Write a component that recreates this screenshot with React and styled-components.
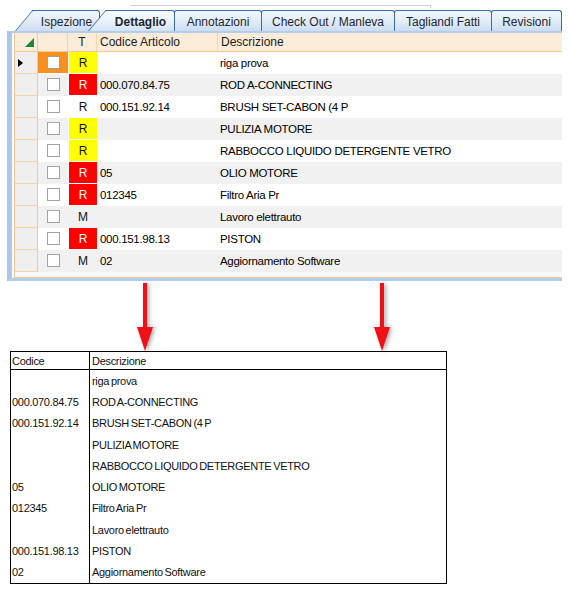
import styled, { createGlobalStyle } from 'styled-components';

const GlobalStyle = createGlobalStyle`
  html, body { margin: 0; padding: 0; background: #fff; }
  body { font-family: "Liberation Sans", Arial, sans-serif; color: #000; }
`;

const rows = [
  { t: 'R', tone: 'yellow', code: '', desc: 'riga prova', current: true },
  { t: 'R', tone: 'red', code: '000.070.84.75', desc: 'ROD A-CONNECTING' },
  { t: 'R', tone: '', code: '000.151.92.14', desc: 'BRUSH SET-CABON (4 P' },
  { t: 'R', tone: 'yellow', code: '', desc: 'PULIZIA MOTORE' },
  { t: 'R', tone: 'yellow', code: '', desc: 'RABBOCCO LIQUIDO DETERGENTE VETRO' },
  { t: 'R', tone: 'red', code: '05', desc: 'OLIO MOTORE' },
  { t: 'R', tone: 'red', code: '012345', desc: 'Filtro Aria Pr' },
  { t: 'M', tone: '', code: '', desc: 'Lavoro elettrauto' },
  { t: 'R', tone: 'red', code: '000.151.98.13', desc: 'PISTON' },
  { t: 'M', tone: '', code: '02', desc: 'Aggiornamento Software' },
];

const tabs = [
  { label: 'Ispezione', w: 85, slant: true },
  { label: 'Dettaglio', w: 87, slant: true, active: true, ml: -12 },
  { label: 'Annotazioni', w: 88, ml: -1 },
  { label: 'Check Out / Manleva', w: 134, ml: -1 },
  { label: 'Tagliandi Fatti', w: 98, ml: -1 },
  { label: 'Revisioni', w: 71, ml: -1 },
];

const COLS = '23px 30px 29px 121px 344px';

function Arrow() {
  return (
    <ArrowSvg width="16" height="70" viewBox="0 0 16 70">
      <rect x="6" y="2" width="4" height="46" fill="#f01018" />
      <polygon points="0,46 16,46 8,70" fill="#f01018" />
    </ArrowSvg>
  );
}

function App() {
  return (
    <Page>
      <GlobalStyle />
      <TopStrip>
        <TopLine />
      </TopStrip>
      <TabBar>
        {tabs.map((t) => (
          <Tab key={t.label} $w={t.w} $ml={t.ml} $slant={t.slant} $active={t.active}>
            <TabLabel $active={t.active}>{t.label}</TabLabel>
          </Tab>
        ))}
      </TabBar>
      <Panel>
        <Grid>
          <HeaderRow>
            <CornerCell>
              <svg width="9" height="9" viewBox="0 0 9 9">
                <polygon points="9,0 9,9 0,9" fill="#17873a" />
              </svg>
            </CornerCell>
            <HeadCell />
            <HeadCell $center>T</HeadCell>
            <HeadCell>Codice Articolo</HeadCell>
            <HeadCell $last>Descrizione</HeadCell>
          </HeaderRow>
          {rows.map((r, i) => (
            <Row key={i} $alt={i % 2 === 1}>
              <SelectorCell>
                {r.current && (
                  <svg width="5" height="8" viewBox="0 0 5 8">
                    <polygon points="0,0 5,4 0,8" fill="#000" />
                  </svg>
                )}
              </SelectorCell>
              <CheckCell $current={r.current}>
                <CheckBox />
              </CheckCell>
              <TypeCell $tone={r.tone}>{r.t}</TypeCell>
              <TextCell $pad={3}>{r.code}</TextCell>
              <TextCell $pad={2}>{r.desc}</TextCell>
            </Row>
          ))}
          <GridFooter />
        </Grid>
      </Panel>
      <ArrowRow>
        <Arrow />
        <Arrow />
      </ArrowRow>
      <PrintTable>
        <PrintHead>Codice</PrintHead>
        <PrintHead $desc>Descrizione</PrintHead>
        {rows.map((r, i) => [
          <PrintCell key={`c${i}`}>{r.code}</PrintCell>,
          <PrintCell key={`d${i}`} $desc>{r.desc}</PrintCell>,
        ])}
      </PrintTable>
    </Page>
  );
}

const Page = styled.div`
  width: 569px;
  height: 592px;
  overflow: hidden;
  background: #fff;
`;

const TopStrip = styled.div`
  height: 10px;
  padding-top: 5px;
  box-sizing: border-box;
`;

const TopLine = styled.div`
  margin-left: 130px;
  width: 300px;
  height: 2px;
  border-top: 1px solid #d0d0d0;
  border-right: 1px solid #d0d0d0;
`;

const TabBar = styled.div`
  display: flex;
  align-items: flex-end;
  height: 21px;
  padding-left: 15px;
`;

const tabGradient = (active) =>
  active
    ? 'linear-gradient(#fafcff 0%, #e9f1fb 55%, #d2e3f6 100%)'
    : 'linear-gradient(#f2f7fd 0%, #e0ebf8 55%, #cbdcf2 100%)';

const Tab = styled.div`
  position: relative;
  box-sizing: border-box;
  width: ${(p) => p.$w}px;
  height: 21px;
  margin-left: ${(p) => p.$ml || 0}px;
  z-index: ${(p) => (p.$active ? 3 : 1)};
  display: flex;
  align-items: center;
  justify-content: center;
  padding-top: 2px;
  padding-left: ${(p) => (p.$slant ? 18 : 0)}px;
  ${(p) =>
    p.$slant
      ? `
    &::before {
      content: '';
      position: absolute;
      left: 0; top: 0; bottom: 0;
      width: 40px;
      background: ${tabGradient(p.$active)};
      border-left: 1px solid #3d6ca6;
      border-top: 1px solid #3d6ca6;
      transform: skewX(-40deg);
      transform-origin: bottom left;
      z-index: 1;
    }
    &::after {
      content: '';
      position: absolute;
      left: 17px; right: 0; top: 0; bottom: 0;
      background: ${tabGradient(p.$active)};
      border-top: 1px solid #3d6ca6;
      border-right: 1px solid #3d6ca6;
      border-radius: 0 3px 0 0;
      z-index: 0;
    }
  `
      : `
    background: ${tabGradient(false)};
    border: 1px solid #3d6ca6;
    border-bottom: none;
    border-radius: 3px 3px 0 0;
  `}
`;

const TabLabel = styled.span`
  position: relative;
  z-index: 2;
  font-size: 12px;
  font-weight: ${(p) => (p.$active ? 700 : 400)};
  color: #1e2630;
  white-space: nowrap;
`;

const Panel = styled.div`
  margin-left: 7px;
  width: 555px;
  border-top: 2px solid #b4cdef;
  border-left: 5px solid #abc7ee;
  border-bottom: 3px solid #b4cdef;
  padding-left: 2px;
  box-sizing: border-box;
  background: #fff;
`;

const Grid = styled.div`
  border-left: 1px solid #f3c899;
  border-bottom: 1px solid #f3c899;
`;

const HeaderRow = styled.div`
  display: grid;
  grid-template-columns: ${COLS};
  height: 19px;
  background: #fdecd8;
  border-bottom: 1px solid #f3c899;
  box-sizing: border-box;
`;

const HeadCell = styled.div`
  display: flex;
  align-items: center;
  justify-content: ${(p) => (p.$center ? 'center' : 'flex-start')};
  padding-left: ${(p) => (p.$center ? 0 : 3)}px;
  border-right: ${(p) => (p.$last ? 'none' : '1px solid #f6d4ae')};
  font-size: 12px;
  color: #1b1b1b;
  white-space: nowrap;
`;

const CornerCell = styled(HeadCell)`
  justify-content: flex-end;
  align-items: flex-end;
  padding: 0 3px 4px 0;
  border-right: 1px solid #f3c899;
  svg { display: block; }
`;

const Row = styled.div`
  display: grid;
  grid-template-columns: ${COLS};
  height: 22px;
  background: ${(p) => (p.$alt ? '#f1f1f1' : '#fff')};
`;

const SelectorCell = styled.div`
  background: #efefef;
  border-right: 1px solid #f3c899;
  border-bottom: 1px solid #f6d3ab;
  display: flex;
  align-items: center;
  padding-left: 3px;
  svg { display: block; }
`;

const CheckCell = styled.div`
  display: flex;
  align-items: center;
  justify-content: center;
  background: ${(p) => (p.$current ? '#f7901e' : 'transparent')};
  border-bottom: 1px solid ${(p) => (p.$current ? '#fff' : 'transparent')};
`;

const CheckBox = styled.div`
  width: 13px;
  height: 13px;
  box-sizing: border-box;
  border: 1px solid #a3a3a3;
  background: #fff;
`;

const TypeCell = styled.div`
  display: flex;
  align-items: center;
  justify-content: center;
  font-size: 12px;
  background: ${(p) => (p.$tone === 'red' ? '#ff0000' : p.$tone === 'yellow' ? '#ffff00' : 'transparent')};
  color: ${(p) => (p.$tone === 'red' ? '#fff' : '#111')};
  border-bottom: 1px solid ${(p) => (p.$tone ? '#fff' : 'transparent')};
  border-left: 1px solid ${(p) => (p.$tone ? '#fff' : 'transparent')};
`;

const TextCell = styled.div`
  display: flex;
  align-items: center;
  padding-left: ${(p) => p.$pad}px;
  font-size: 11.5px;
  letter-spacing: -0.3px;
  white-space: nowrap;
  overflow: hidden;
`;

const GridFooter = styled.div`
  height: 5px;
  background: #fafafa;
`;

const ArrowRow = styled.div`
  display: flex;
  height: 70px;
  padding-left: 137px;
  gap: 221px;
  position: relative;
  z-index: 2;
`;

const ArrowSvg = styled.svg`
  display: block;
  filter: drop-shadow(2px 1px 2px rgba(0, 0, 0, 0.35));
`;

const PrintTable = styled.div`
  margin-left: 10px;
  width: 437px;
  box-sizing: border-box;
  border: 1px solid #000;
  display: grid;
  grid-template-columns: 79px 1fr;
  grid-template-rows: 18px repeat(10, 21.3px);
`;

const PrintHead = styled.div`
  border-bottom: 1px solid #000;
  border-right: ${(p) => (p.$desc ? 'none' : '1px solid #000')};
  padding-left: ${(p) => (p.$desc ? 2 : 1)}px;
  display: flex;
  align-items: center;
  font-size: 11px;
  letter-spacing: -0.3px;
  color: #111;
`;

const PrintCell = styled.div`
  border-right: ${(p) => (p.$desc ? 'none' : '1px solid #000')};
  padding-left: ${(p) => (p.$desc ? 2 : 1)}px;
  display: flex;
  align-items: center;
  font-size: 11px;
  letter-spacing: -0.3px;
  word-spacing: -1px;
  color: #111;
  white-space: nowrap;
`;

export default App;
